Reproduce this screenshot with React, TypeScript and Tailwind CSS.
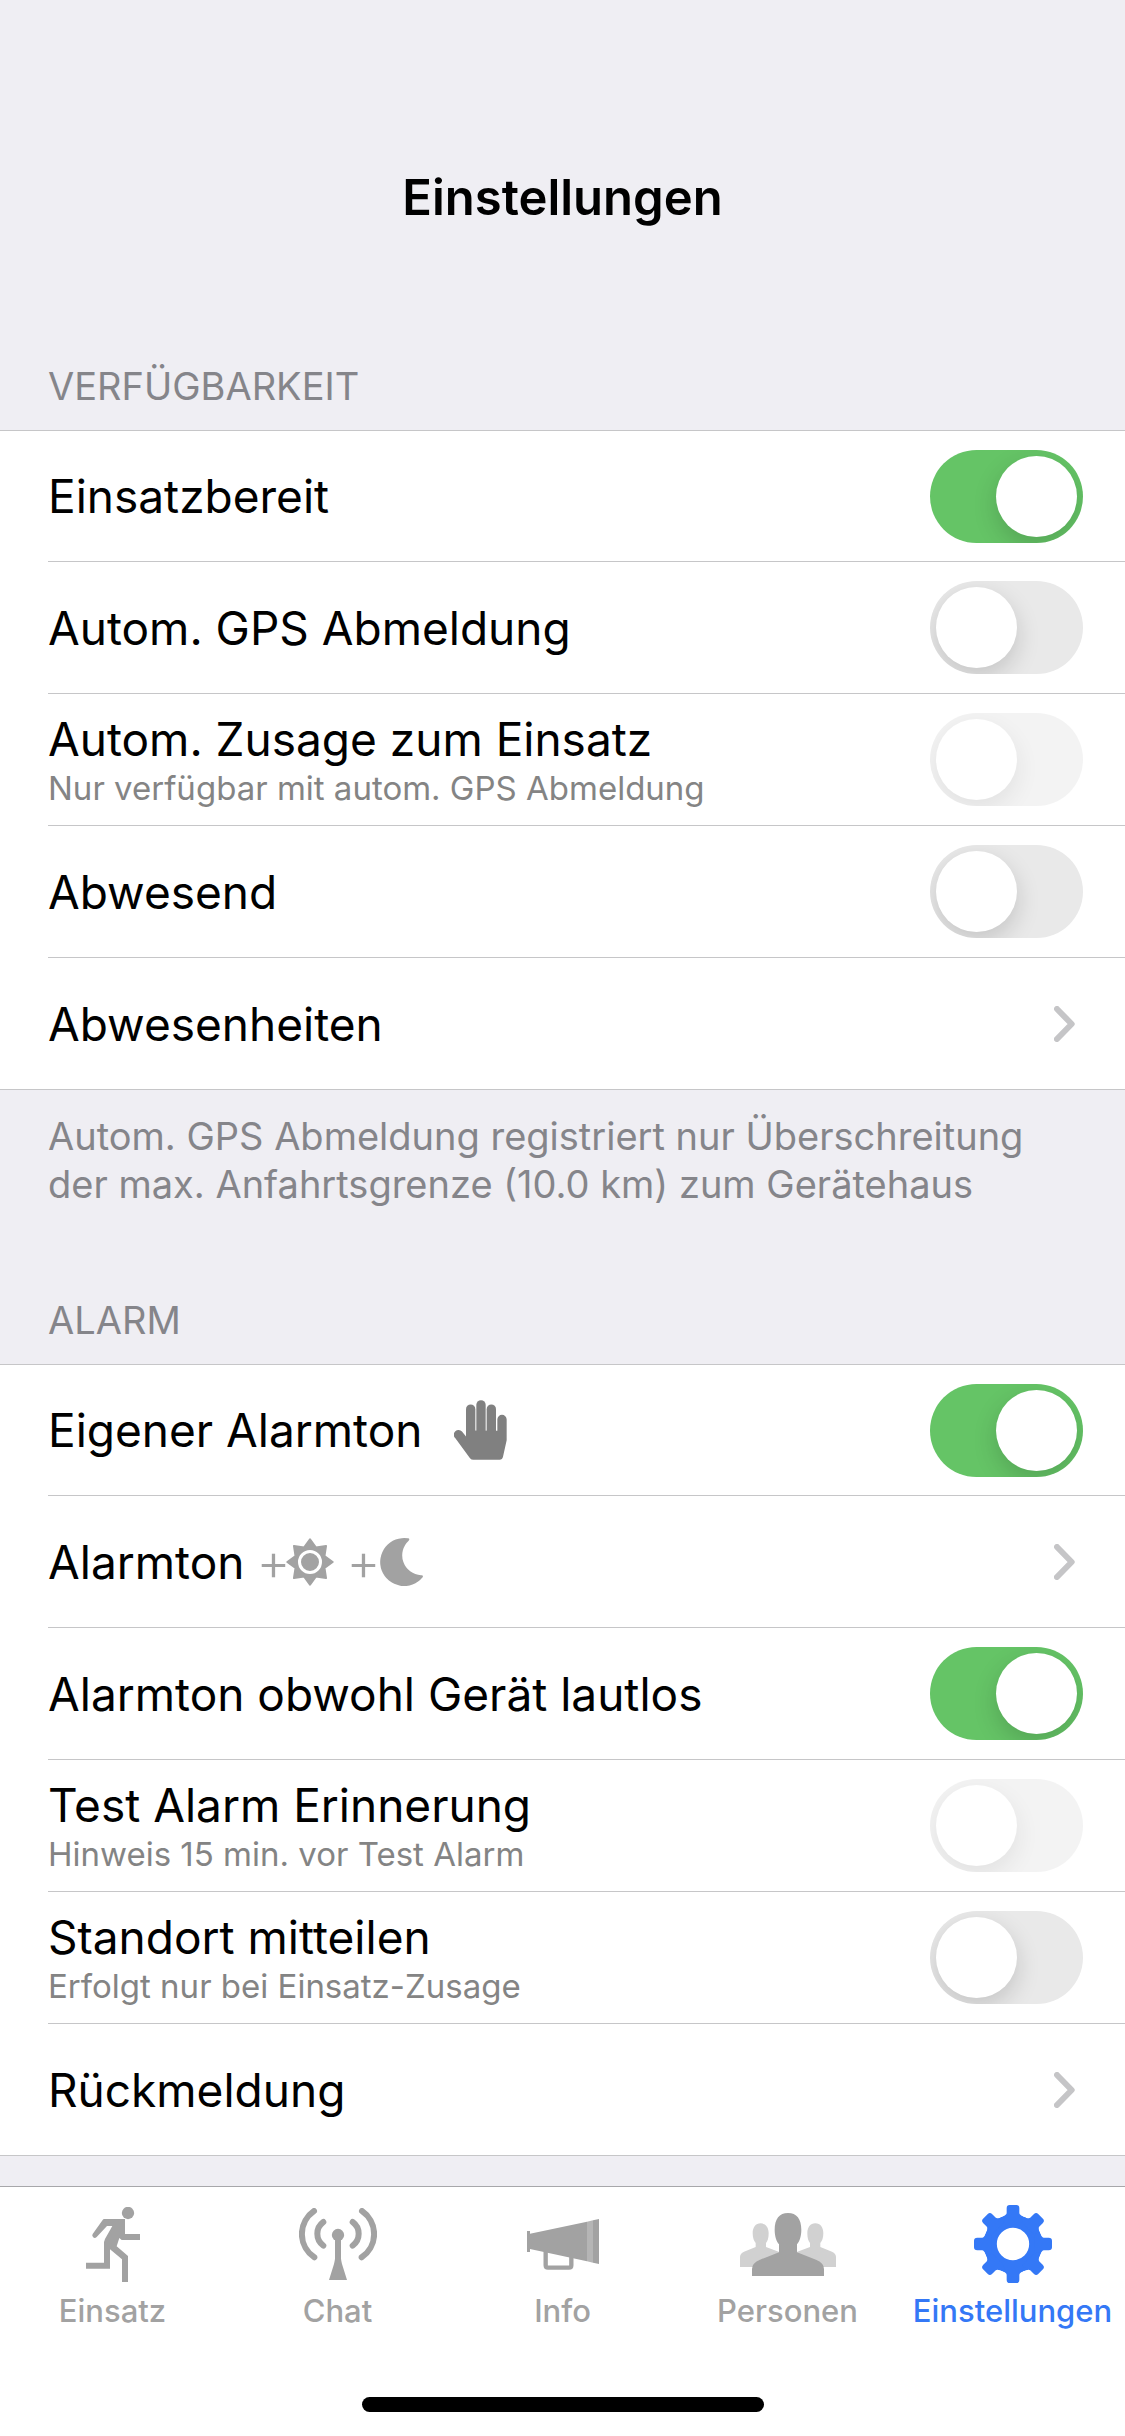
import React, { useState } from 'react';
import clsx from 'clsx';

interface IconProps {
  className?: string;
}

const HandIcon: React.FC<IconProps> = ({ className }) => (
  <svg viewBox="0 0 159 179" className={className} fill="currentColor" aria-hidden="true">
    <rect x="36" y="13" width="28" height="110" rx="14" />
    <rect x="67" y="0" width="28" height="120" rx="14" />
    <rect x="98" y="13" width="28" height="110" rx="14" />
    <path d="M130 92V58a14 14 0 0 1 28 0v62l-11 50q-2 9-10 9H58q-6 0-10-5L3 113a14 14 0 0 1 21-19l12 15V91z" />
  </svg>
);

const SUN_POINTS = Array.from({ length: 16 }, (_, i) => {
  const radius = i % 2 === 0 ? 68 : 47;
  const angle = (i * Math.PI) / 8;
  return `${(72 + radius * Math.sin(angle)).toFixed(1)},${(72 - radius * Math.cos(angle)).toFixed(1)}`;
}).join(' ');

const SunIcon: React.FC<IconProps> = ({ className }) => (
  <svg viewBox="0 0 144 144" className={className} fill="currentColor" aria-hidden="true">
    <polygon points={SUN_POINTS} stroke="currentColor" strokeWidth="6" strokeLinejoin="round" />
    <circle cx="72" cy="72" r="31.5" stroke="white" strokeWidth="9" />
  </svg>
);

const MoonIcon: React.FC<IconProps> = ({ className }) => (
  <svg viewBox="0 0 129 144" className={className} fill="currentColor" aria-hidden="true">
    <path d="M84 1A72 72 0 1 0 128 118q3-7-5-6A60 60 0 0 1 86 8q5-6-2-7z" />
  </svg>
);

const ChevronIcon: React.FC<IconProps> = ({ className }) => (
  <svg viewBox="0 0 63 108" className={className} fill="none" aria-hidden="true">
    <path d="M9 9l44 45L9 99" stroke="currentColor" strokeWidth="18" strokeLinecap="round" strokeLinejoin="round" />
  </svg>
);

const RunnerIcon: React.FC<IconProps> = ({ className }) => (
  <svg viewBox="0 0 162 225" className={className} fill="currentColor" aria-hidden="true">
    <circle cx="126" cy="18" r="18.5" />
    <path d="M54 36h63v45h45v18h-55l-7-6-8 25 34 29v78h-18v-68l-36-30v58H0v-18h54v-62l3-9 22-39H63L32 90q-6 6-11 0-4-4-1-9l30-42q2-3 4-3z" />
  </svg>
);

const AntennaIcon: React.FC<IconProps> = ({ className }) => (
  <svg viewBox="0 0 234 216" className={className} fill="currentColor" aria-hidden="true">
    <circle cx="117" cy="81" r="18.5" />
    <path d="M108 95h18v57q1 8 3 16l15 48H90l15-48q2-8 3-16z" />
    <g fill="none" stroke="currentColor" strokeWidth="18" strokeLinecap="round">
      <path d="M45 9A84 84 0 0 0 46 148" />
      <path d="M73 42A44 44 0 0 0 73 113" />
      <path d="M189 9A84 84 0 0 1 188 148" />
      <path d="M161 42A44 44 0 0 1 161 113" />
    </g>
  </svg>
);

const MegaphoneIcon: React.FC<IconProps> = ({ className }) => (
  <svg viewBox="0 0 216 153" className={className} fill="currentColor" aria-hidden="true">
    <path d="M0 36h9v63H0z" />
    <path d="M9 44l171-36v119L9 90z" />
    <path d="M180 8l18-4v127l-18-4z" opacity="0.8" />
    <path d="M198 4l18-4v135l-18-4z" />
    <path d="M56 98v41q0 7 7 7h63q7 0 7-7v-25" fill="none" stroke="currentColor" strokeWidth="13" />
  </svg>
);

const PeopleIcon: React.FC<IconProps> = ({ className }) => (
  <svg viewBox="0 0 288 189" className={className} fill="currentColor" aria-hidden="true">
    <g className="text-[#d1d1d1]">
      <path d="M62 31c-15 0-24 12-24 30 0 14 4 24 9 29v12L12 116Q0 121 0 132v30h60l60-44-42-16V90c5-5 8-15 8-29 0-18-9-30-24-30z" />
      <path d="M226 31c15 0 24 12 24 30 0 14-4 24-9 29v12l35 14q12 5 12 16v30h-60l-60-44 42-16V90c-5-5-8-15-8-29 0-18 9-30 24-30z" />
    </g>
    <path d="M144 0c-26 0-40 18-40 50 0 21 6 36 13 44v24l-57 22q-24 10-24 28v21h216v-21q0-18-24-28l-57-22V94c7-8 13-23 13-44 0-32-14-50-40-50z" />
  </svg>
);

const GEAR_ANGLES = [0, 45, 90, 135, 180, 225, 270, 315];

const GearIcon: React.FC<IconProps> = ({ className }) => (
  <svg viewBox="-117 -117 234 234" className={className} fill="currentColor" aria-hidden="true">
    <circle r="68" fill="none" stroke="currentColor" strokeWidth="39" />
    {GEAR_ANGLES.map(angle => (
      <path
        key={angle}
        d="M-42-76Q-19-86-19-92V-107Q-19-117-10-117H10Q19-117 19-107V-92Q19-86 42-76L24-64H-24z"
        transform={`rotate(${angle})`}
      />
    ))}
  </svg>
);

interface SwitchProps {
  id: string;
  defaultChecked?: boolean;
  disabled?: boolean;
}

const Switch: React.FC<SwitchProps> = ({ id, defaultChecked = false, disabled = false }) => {
  const [checked, setChecked] = useState(defaultChecked);

  return (
    <input
      id={id}
      type="checkbox"
      role="switch"
      checked={checked}
      disabled={disabled}
      onChange={event => setChecked(event.target.checked)}
      className="h-[93px] w-[153px] flex-shrink-0 cursor-pointer appearance-none overflow-hidden rounded-full bg-[#e9e9e9] p-1.5 transition-colors before:block before:size-[81px] before:rounded-full before:bg-white before:shadow-[0_9px_24px_rgba(0,0,0,0.16)] before:transition-transform before:content-[''] checked:bg-[#65c466] checked:before:translate-x-[60px] disabled:cursor-default disabled:opacity-50"
    />
  );
};

interface RowProps {
  id: string;
  label: string;
  detail?: string;
  extra?: React.ReactNode;
  kind: 'switch' | 'link';
  checked?: boolean;
  disabled?: boolean;
}

const Row: React.FC<RowProps> = ({ id, label, detail, extra, kind, checked, disabled }) => {
  const text = (
    <span className="flex min-w-0 flex-1 flex-col">
      <span className="flex items-center text-[46px] leading-[56px] text-black">
        {label}
        {extra}
      </span>
      {detail && <span className="text-[33px] leading-[42px] text-[#848484]">{detail}</span>}
    </span>
  );

  return (
    <li className="group h-[132px] border-[#c6c6c8] bg-white pl-12 first:border-t last:border-b">
      <div className="flex h-full items-center border-b border-[#c6c6c8] group-last:border-b-0">
        {kind === 'switch' ? (
          <div className="flex flex-1 items-center pr-[42px]">
            <label htmlFor={id} className="flex flex-1">
              {text}
            </label>
            <Switch id={id} defaultChecked={checked} disabled={disabled} />
          </div>
        ) : (
          <a href={`#${id}`} className="flex flex-1 items-center pr-[50px]">
            {text}
            <ChevronIcon className="h-9 w-[21px] text-[#c5c5c7]" />
          </a>
        )}
      </div>
    </li>
  );
};

interface SectionProps {
  title: string;
  rows: RowProps[];
  footer?: string;
}

const Section: React.FC<SectionProps> = ({ title, rows, footer }) => (
  <section>
    <h2 className="px-12 pb-5 text-[38px] leading-[48px] text-[#85858a] uppercase">{title}</h2>
    <ul>
      {rows.map(row => (
        <Row key={row.id} {...row} />
      ))}
    </ul>
    {footer && <p className="px-12 pt-[22px] text-[38px] leading-[48px] text-[#85858a]">{footer}</p>}
  </section>
);

const availabilityRows: RowProps[] = [
  { id: 'einsatzbereit', label: 'Einsatzbereit', kind: 'switch', checked: true },
  { id: 'gps-abmeldung', label: 'Autom. GPS Abmeldung', kind: 'switch' },
  {
    id: 'zusage',
    label: 'Autom. Zusage zum Einsatz',
    detail: 'Nur verfügbar mit autom. GPS Abmeldung',
    kind: 'switch',
    disabled: true,
  },
  { id: 'abwesend', label: 'Abwesend', kind: 'switch' },
  { id: 'abwesenheiten', label: 'Abwesenheiten', kind: 'link' },
];

const alarmRows: RowProps[] = [
  {
    id: 'eigener-alarmton',
    label: 'Eigener Alarmton',
    kind: 'switch',
    checked: true,
    extra: <HandIcon className="ml-8 h-[60px] w-[53px] text-[#808080]" />,
  },
  {
    id: 'alarmton',
    label: 'Alarmton',
    kind: 'link',
    extra: (
      <span className="ml-3 flex items-center text-[52px] font-light text-[#a2a2a2]">
        <span>+</span>
        <SunIcon className="-ml-1 size-12" />
        <span className="ml-3">+</span>
        <MoonIcon className="h-12 w-[43px]" />
      </span>
    ),
  },
  { id: 'lautlos', label: 'Alarmton obwohl Gerät lautlos', kind: 'switch', checked: true },
  {
    id: 'test-alarm',
    label: 'Test Alarm Erinnerung',
    detail: 'Hinweis 15 min. vor Test Alarm',
    kind: 'switch',
    disabled: true,
  },
  { id: 'standort', label: 'Standort mitteilen', detail: 'Erfolgt nur bei Einsatz-Zusage', kind: 'switch' },
  { id: 'rueckmeldung', label: 'Rückmeldung', kind: 'link' },
];

const tabs = [
  { label: 'Einsatz', icon: <RunnerIcon className="h-[75px] w-[54px]" /> },
  { label: 'Chat', icon: <AntennaIcon className="h-[72px] w-[78px]" /> },
  { label: 'Info', icon: <MegaphoneIcon className="h-[51px] w-[72px]" /> },
  { label: 'Personen', icon: <PeopleIcon className="h-[63px] w-24" /> },
  { label: 'Einstellungen', icon: <GearIcon className="size-[78px]" /> },
];

const TabBar: React.FC = () => {
  const [active, setActive] = useState('Einstellungen');

  return (
    <nav className="sticky bottom-0 mt-auto border-t border-[#a7a7aa] bg-white pt-[18px] pb-6">
      <div className="grid grid-cols-5">
        {tabs.map(({ label, icon }) => (
          <button
            key={label}
            type="button"
            onClick={() => setActive(label)}
            aria-current={active === label ? 'page' : undefined}
            className={clsx(
              'flex flex-col items-center gap-2.5 text-[31px] leading-[36px] font-medium',
              active === label ? 'text-[#3478f6]' : 'text-[#a2a2a2]'
            )}
          >
            <span className="flex h-[78px] items-center">{icon}</span>
            {label}
          </button>
        ))}
      </div>
      <div className="mx-auto mt-[68px] h-[15px] w-[402px] rounded-full bg-black" />
    </nav>
  );
};

const App: React.FC = () => (
  <div className="flex min-h-screen flex-col bg-[#efeef3] font-['Inter','Liberation_Sans',sans-serif]">
    <header className="pt-[168px] pb-[134px]">
      <h1 className="text-center text-[49px] leading-[60px] font-semibold text-black">Einstellungen</h1>
    </header>
    <main className="flex flex-col gap-[88px] pb-[30px]">
      <Section
        title="Verfügbarkeit"
        rows={availabilityRows}
        footer="Autom. GPS Abmeldung registriert nur Überschreitung der max. Anfahrtsgrenze (10.0 km) zum Gerätehaus"
      />
      <Section title="Alarm" rows={alarmRows} />
    </main>
    <TabBar />
  </div>
);

export default App;
